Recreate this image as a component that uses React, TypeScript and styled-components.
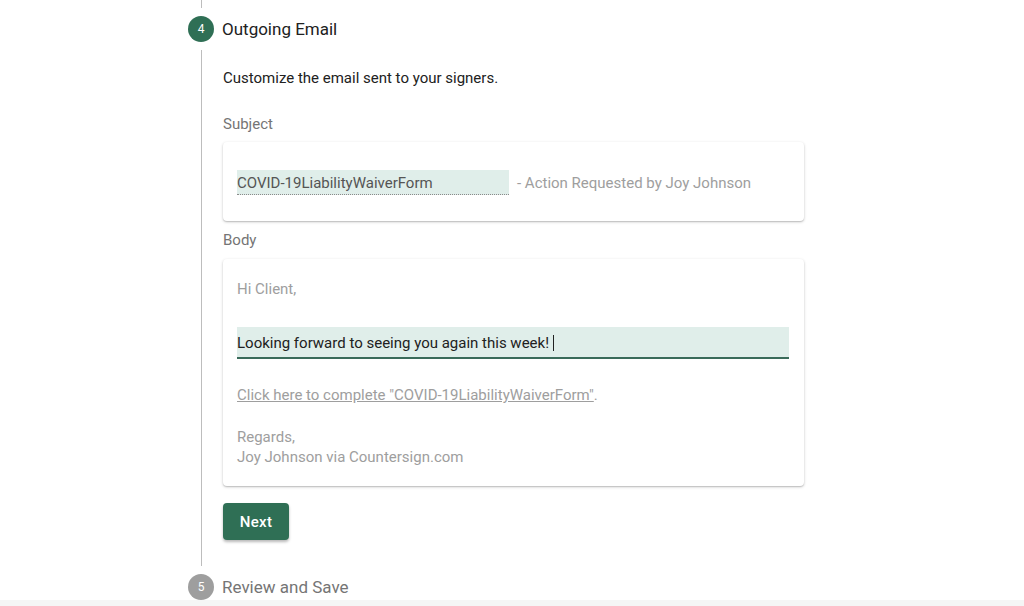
import React from "react";
import styled, { createGlobalStyle } from "styled-components";

const GlobalStyle = createGlobalStyle`
  html, body {
    margin: 0;
    padding: 0;
    background: #f5f5f5;
    font-family: Roboto, "Liberation Sans", Arial, sans-serif;
  }
  #root {
    height: 606px;
    overflow: hidden;
  }
`;

const Page = styled.div`
  background: #ffffff;
  height: 600px;
  padding-left: 188px;
  box-sizing: border-box;
  overflow: hidden;
`;

const Connector = styled.div`
  margin-left: 13px;
  height: 8px;
  border-left: 1px solid #bdbdbd;
`;

const StepHeader = styled.div<{ $bottom?: number }>`
  display: flex;
  align-items: center;
  gap: 8px;
  padding: 8px 0 ${(p) => (p.$bottom ?? 8)}px;
`;

const StepIcon = styled.div<{ $active?: boolean }>`
  width: 26px;
  height: 26px;
  border-radius: 50%;
  background: ${(p) => (p.$active ? "#2f6f55" : "#9e9e9e")};
  color: #ffffff;
  font-size: 12px;
  display: flex;
  align-items: center;
  justify-content: center;
`;

const StepTitle = styled.div<{ $active?: boolean }>`
  font-size: 17px;
  color: ${(p) => (p.$active ? "#212121" : "#757575")};
`;

const StepContent = styled.div`
  margin-left: 13px;
  border-left: 1px solid #bdbdbd;
  padding: 18px 0 26px 21px;
  width: 581px;
`;

const Intro = styled.div`
  font-size: 15px;
  line-height: 20px;
  color: #212121;
`;

const FieldLabel = styled.div<{ $top: number; $bottom: number }>`
  font-size: 15px;
  line-height: 20px;
  color: #757575;
  margin-top: ${(p) => p.$top}px;
  margin-bottom: ${(p) => p.$bottom}px;
`;

const Card = styled.div<{ $pad: string }>`
  background: #ffffff;
  border-radius: 4px;
  box-shadow: 0 1px 3px rgba(0, 0, 0, 0.22), 0 1px 1px rgba(0, 0, 0, 0.1);
  padding: ${(p) => p.$pad};
`;

const SubjectRow = styled.div`
  display: flex;
  align-items: center;
  gap: 8px;
`;

const SubjectInput = styled.div`
  width: 272px;
  height: 25px;
  background: #e0eeea;
  border-bottom: 1px dotted #8a8a8a;
  display: flex;
  align-items: center;
  padding-top: 1px;
  box-sizing: border-box;
  font-size: 15px;
  color: #555555;
`;

const Muted = styled.div<{ $top?: number }>`
  font-size: 15px;
  line-height: 20px;
  color: #9e9e9e;
  margin-top: ${(p) => p.$top ?? 0}px;
`;

const BodyInput = styled.div`
  margin-top: 28px;
  height: 28px;
  padding-top: 2px;
  box-sizing: content-box;
  background: #e0eeea;
  border-bottom: 2px solid #3a6b5a;
  display: flex;
  align-items: center;
  font-size: 15px;
  color: #212121;
`;

const Caret = styled.span`
  display: inline-block;
  width: 1px;
  height: 16px;
  background: #212121;
  margin-left: 4px;
`;

const LinkText = styled.span`
  text-decoration: underline;
`;

const NextButton = styled.button`
  margin-top: 17px;
  width: 66px;
  height: 37px;
  border: none;
  border-radius: 4px;
  background: #2f6f55;
  color: #ffffff;
  font-family: Roboto, "Liberation Sans", Arial, sans-serif;
  font-size: 15px;
  font-weight: 500;
  letter-spacing: 0.3px;
  padding-top: 1px;
  box-shadow: 0 2px 3px rgba(0, 0, 0, 0.28);
`;

export default function App() {
  return (
    <>
      <GlobalStyle />
      <Page>
        <Connector />
        <StepHeader>
          <StepIcon $active>4</StepIcon>
          <StepTitle $active>Outgoing Email</StepTitle>
        </StepHeader>
        <StepContent>
          <Intro>Customize the email sent to your signers.</Intro>
          <FieldLabel $top={26} $bottom={8}>Subject</FieldLabel>
          <Card $pad="28px 14px 26px">
            <SubjectRow>
              <SubjectInput>COVID-19LiabilityWaiverForm</SubjectInput>
              <Muted>- Action Requested by Joy Johnson</Muted>
            </SubjectRow>
          </Card>
          <FieldLabel $top={9} $bottom={9}>Body</FieldLabel>
          <Card $pad="20px 15px 19px 14px">
            <Muted>Hi Client,</Muted>
            <BodyInput>
              Looking forward to seeing you again this week!
              <Caret />
            </BodyInput>
            <Muted $top={26}>
              <LinkText>Click here to complete "COVID-19LiabilityWaiverForm"</LinkText>.
            </Muted>
            <Muted $top={22}>Regards,</Muted>
            <Muted>Joy Johnson via Countersign.com</Muted>
          </Card>
          <NextButton>Next</NextButton>
        </StepContent>
        <StepHeader $bottom={1}>
          <StepIcon>5</StepIcon>
          <StepTitle>Review and Save</StepTitle>
        </StepHeader>
      </Page>
    </>
  );
}
